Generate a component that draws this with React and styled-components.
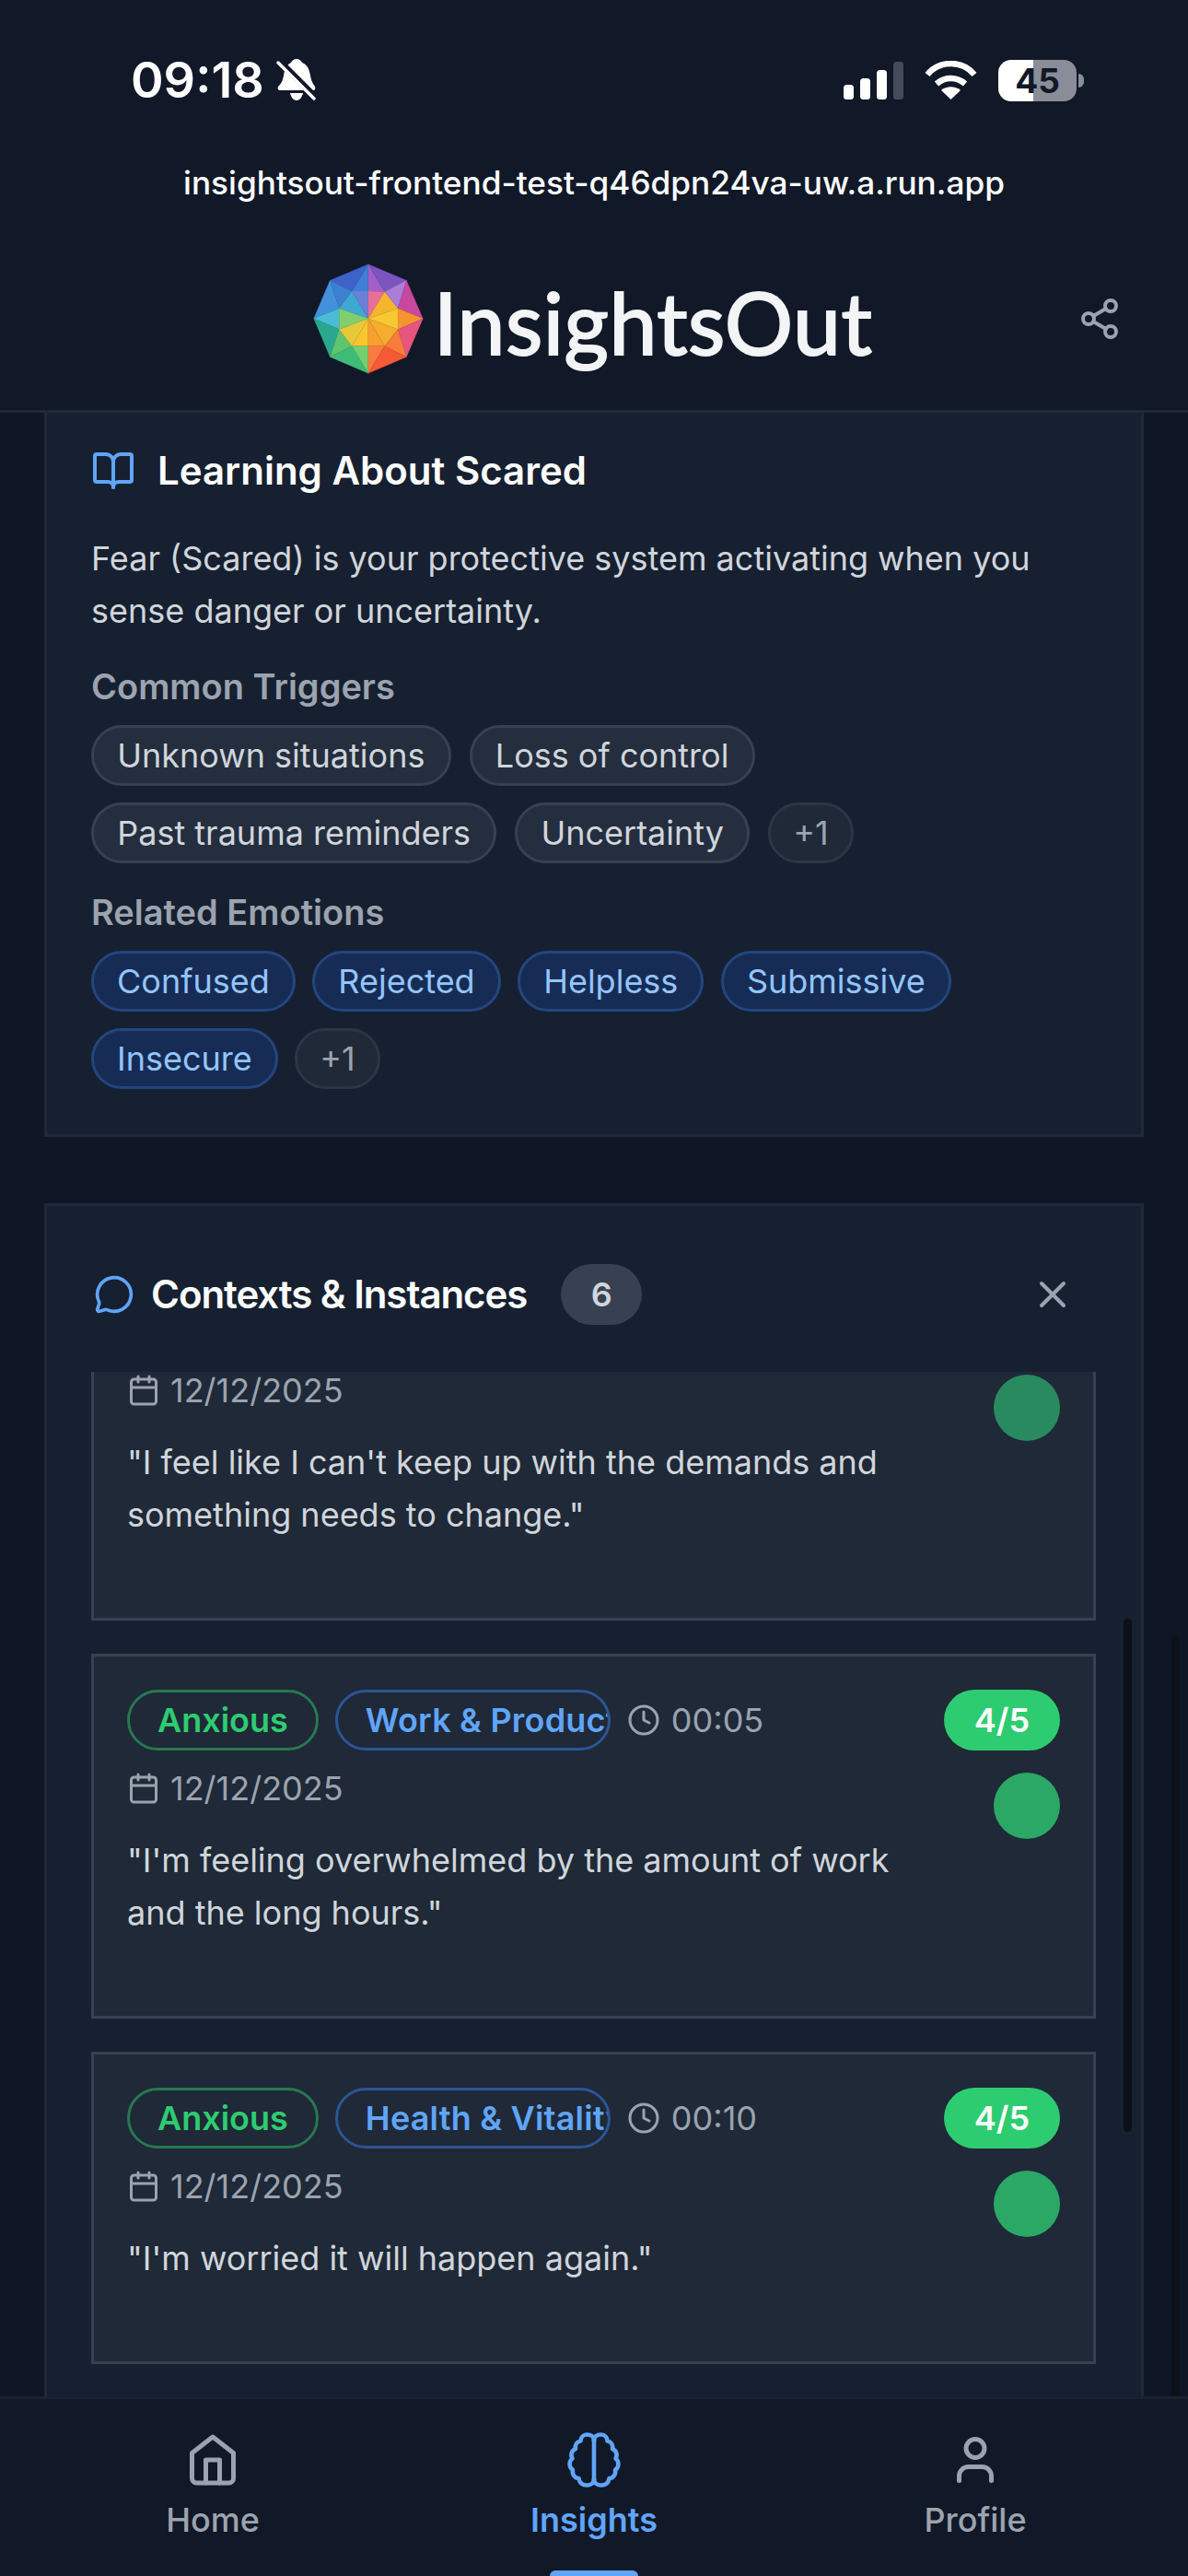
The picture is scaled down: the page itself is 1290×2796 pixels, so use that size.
import React, { useLayoutEffect, useRef } from 'react'
import styled, { createGlobalStyle } from 'styled-components'
import { BookOpen, Calendar, Clock, MessageCircle, Share2, User, X } from 'lucide-react'

const GlobalStyle = createGlobalStyle`
  html, body { margin: 0; padding: 0; background: #111827; }
  * { box-sizing: border-box; }
  body { font-family: Inter, "Liberation Sans", sans-serif; }
`

const Page = styled.div`
  width: 1290px;
  height: 2796px;
  display: flex;
  flex-direction: column;
  overflow: hidden;
  background: #111827;
`

/* top of the screen */
const Header = styled.header`
  height: 448px;
  flex: none;
  background: #111827;
  border-bottom: 3px solid #1f2937;
  color: #fff;
`
const StatusBar = styled.div`
  height: 132px;
  padding: 64px 121px 0 142px;
  display: flex;
  justify-content: space-between;
  align-items: flex-start;
`
const StatusLeft = styled.div`
  display: flex;
  align-items: center;
  gap: 13px;
  height: 46px;
`
const Time = styled.span`
  font-size: 54px;
  font-weight: 600;
  line-height: 46px;
`
const StatusRight = styled.div`
  display: flex;
  align-items: center;
  gap: 23px;
  height: 46px;
`
const Battery = styled.div`
  position: relative;
  width: 85px;
  height: 45px;
  border-radius: 14px;
  background: linear-gradient(to right, #fff 45%, #8a8d98 45%);
  color: #111827;
  font-size: 37px;
  font-weight: 700;
  line-height: 45px;
  text-align: center;
  &::after {
    content: '';
    position: absolute;
    right: -8px;
    top: 15px;
    width: 6px;
    height: 15px;
    border-radius: 0 6px 6px 0;
    background: #8a8d98;
  }
`
const UrlBar = styled.div`
  height: 44px;
  margin-top: 44px;
  font-size: 35.2px;
  font-weight: 500;
  line-height: 44px;
  text-align: center;
`
const Brand = styled.div`
  position: relative;
  display: flex;
  align-items: center;
  justify-content: center;
  gap: 11px;
  height: 120px;
  margin-top: 66px;
  padding-right: 3px;
`
const BrandName = styled.span`
  margin-top: 5px;
  font-family: Lato, "Open Sans", sans-serif;
  font-size: 93px;
  font-weight: 400;
  line-height: 120px;
  letter-spacing: 0.5px;
  -webkit-text-stroke: 2px #f3f4f6;
  color: #f3f4f6;
`
const ShareButton = styled.div`
  position: absolute;
  right: 72px;
  top: 36px;
  display: flex;
  color: #9ca3af;
`

/* scrolling content */
const Main = styled.main`
  position: relative;
  flex: 1;
  min-height: 0;
  overflow: hidden;
  padding: 0 48px;
  background: #0f1726;
`
const Card = styled.section`
  background: #162030;
  border: 3px solid #1f2937;
  border-top-width: ${(p) => (p.$clipped ? 0 : 3)}px;
  padding: ${(p) => (p.$clipped ? '33px 49px 49px 48px' : '63px 49px 0 48px')};
  margin-bottom: 72px;
`
const TitleRow = styled.div`
  display: flex;
  align-items: center;
  gap: ${(p) => p.$gap}px;
  height: ${(p) => p.$height}px;
  color: #60a5fa;
`
const LearnTitle = styled.h2`
  margin: 0;
  font-size: 42px;
  font-weight: 600;
  line-height: 60px;
  color: #fff;
`
const ContextTitle = styled(LearnTitle)`
  letter-spacing: -1.05px;
`
const BubbleIcon = styled(MessageCircle)`
  margin-left: 3px;
`
const Body = styled.p`
  margin: 37px 0 0;
  font-size: 36px;
  line-height: 57px;
  color: #d1d5db;
`
const Label = styled.h3`
  margin: 29px 0 18px;
  font-size: 38px;
  font-weight: 600;
  line-height: 48px;
  color: #9ca3af;
`
const ChipWrap = styled.div`
  display: flex;
  flex-wrap: wrap;
  gap: 18px ${(p) => (p.$tight ? 18.5 : 20)}px;
`
const Chip = styled.span`
  height: 66px;
  padding: 0 ${(p) => (p.$blue ? 25 : 25.2)}px;
  border: 3px solid ${(p) => (p.$blue ? '#23467f' : '#374151')};
  border-radius: 33px;
  background: ${(p) => (p.$blue ? '#172c54' : '#242e3e')};
  color: ${(p) => (p.$blue ? '#93c5fd' : '#d1d5db')};
  font-size: 36px;
  line-height: 60px;
  white-space: nowrap;
`
const MoreChip = styled(Chip)`
  padding: 0 24px;
  border-color: #2c3644;
  background: #1f2937;
  color: #9ca3af;
`
const CountPill = styled.span`
  width: 88px;
  height: 66px;
  margin-left: 19px;
  border-radius: 33px;
  background: #374151;
  color: #d1d5db;
  font-size: 36px;
  font-weight: 600;
  line-height: 66px;
  text-align: center;
`
const CloseButton = styled.div`
  margin-left: auto;
  margin-right: 23px;
  display: flex;
  color: #9ca3af;
`

const InstanceViewport = styled.div`
  height: 1150px;
  margin-top: 51px;
  overflow: hidden;
`
const InstanceList = styled.div`
  display: flex;
  flex-direction: column;
  gap: 36px;
  padding-bottom: 300px;
`
const Instance = styled.article`
  display: grid;
  grid-template-columns: 1fr auto;
  column-gap: 24px;
  padding: 36px 36px 83px;
  border: 3px solid #374151;
  background: #1f2937;
`
const InstanceInfo = styled.div`
  min-width: 0;
`
const MetaRow = styled.div`
  display: flex;
  align-items: center;
  gap: 18px;
  height: 66px;
`
const Tag = styled.span`
  flex: none;
  height: 66px;
  padding: 0 ${(p) => (p.$blue ? 0 : 30)}px 0 30px;
  max-width: 299px;
  overflow: hidden;
  border: 3px solid ${(p) => (p.$blue ? '#2c5596' : '#28784f')};
  border-radius: 33px;
  color: ${(p) => (p.$blue ? '#60a5fa' : '#2ecc71')};
  font-size: 36px;
  font-weight: 600;
  line-height: 60px;
  letter-spacing: ${(p) => (p.$blue ? 0.2 : 0)}px;
  white-space: nowrap;
`
const Stamp = styled.span`
  display: flex;
  align-items: center;
  gap: 12px;
  color: #9ca3af;
  font-size: 36px;
  line-height: 44px;
`
const DateRow = styled(Stamp)`
  margin: 19px 0 0;
  gap: 11px;
`
const Quote = styled.p`
  margin: 28px 0 0;
  max-width: 850px;
  color: #d1d5db;
  font-size: 36px;
  line-height: 57px;
`
const ScoreColumn = styled.div`
  display: flex;
  flex-direction: column;
  align-items: flex-end;
  gap: 24px;
`
const Score = styled.span`
  width: 126px;
  height: 66px;
  border-radius: 33px;
  background: #2ecc71;
  color: #fff;
  font-size: 36px;
  font-weight: 600;
  line-height: 66px;
  text-align: center;
`
const ScoreDot = styled.span`
  width: 72px;
  height: 72px;
  border-radius: 50%;
  background: ${(p) => (p.$dim ? '#2a8a5f' : '#2ba866')};
`
const ScrollThumb = styled.div`
  position: absolute;
  right: ${(p) => p.$right}px;
  top: ${(p) => p.$top}px;
  height: ${(p) => p.$height}px;
  width: 9px;
  border-radius: 5px;
  background: #0c1119;
`

/* bottom tabs */
const Nav = styled.nav`
  flex: none;
  height: 195px;
  padding: 0 24px;
  display: grid;
  grid-template-columns: repeat(3, 1fr);
  border-top: 3px solid #1a2332;
  background: #111827;
`
const NavItem = styled.div`
  position: relative;
  display: flex;
  flex-direction: column;
  align-items: center;
  padding-top: 36px;
  color: ${(p) => (p.$active ? '#60a5fa' : '#9ca3af')};
  font-size: 36px;
  font-weight: ${(p) => (p.$active ? 600 : 500)};
  line-height: 44px;
  & > span { margin-top: 13px; }
  ${(p) => p.$active && `
    &::after {
      content: '';
      position: absolute;
      left: 50%;
      bottom: 0;
      width: 96px;
      height: 6px;
      margin-left: -48px;
      border-radius: 6px 6px 0 0;
      background: #60a5fa;
    }
  `}
`

const facets = [
  ['243,55 118,108 190,143', '#3f62c8'], ['243,55 190,143 243,143', '#3f7fd8'],
  ['243,55 243,143 297,145', '#a060c8'], ['243,55 297,145 368,108', '#7a55c0'],
  ['118,108 148,200 190,143', '#3d7fd0'], ['118,108 65,233 148,200', '#4390dc'],
  ['190,143 148,200 243,233', '#3fa8d0'], ['190,143 243,143 243,233', '#6a80d8'],
  ['243,143 297,145 243,233', '#e86f9a'], ['297,145 340,200 243,233', '#f5b52f'],
  ['297,145 368,108 340,200', '#ab7ed6'], ['368,108 422,233 340,200', '#c8489f'],
  ['65,233 148,200 148,268', '#4abcd6'], ['148,200 243,233 148,268', '#7fcf70'],
  ['243,233 340,200 340,268', '#f7c830'], ['340,200 422,233 340,268', '#f6952f'],
  ['65,233 148,268 118,358', '#2aa88e'], ['148,268 190,323 118,358', '#5fc46f'],
  ['148,268 243,233 190,323', '#e6c83a'], ['243,233 243,323 190,323', '#f9c52f'],
  ['243,233 297,323 243,323', '#f5a02f'], ['243,233 340,268 297,323', '#f4ad2f'],
  ['422,233 340,268 368,358', '#e5557e'], ['340,268 297,323 368,358', '#f97c3a'],
  ['118,358 190,323 243,412', '#3fbc78'], ['190,323 243,323 243,412', '#74d06e'],
  ['243,323 297,323 243,412', '#fb7a3f'], ['297,323 368,358 243,412', '#f55a35'],
]

const LogoMark = () => (
  <svg width="120" height="120" viewBox="63 53 361 361" aria-hidden="true">
    {facets.map(([points, fill]) => (
      <polygon key={points} points={points} fill={fill} stroke={fill} strokeWidth="0.6" />
    ))}
  </svg>
)

const MutedBell = () => (
  <svg width="44" height="47" viewBox="0 0 44 47" aria-hidden="true">
    <path
      fill="#fff"
      d="M22 0c3 0 5 2 6 4 6 2 8 8 9 14 1 6 3 9 5 12 1 2 0 4-2 4H4c-2 0-3-2-2-4 3-3 5-6 6-12 1-6 3-12 8-14 1-2 3-4 6-4zM15 37h14c-1 5-4 8-7 8s-6-3-7-8z"
    />
    <path d="M4 3l37 37" stroke="#111827" strokeWidth="7" />
    <path d="M2 4l39 39" stroke="#fff" strokeWidth="3.4" strokeLinecap="round" />
  </svg>
)

const Signal = () => (
  <svg width="65" height="41" viewBox="0 0 65 41" aria-hidden="true">
    <rect x="0" y="25" width="11" height="16" rx="3.5" fill="#fff" />
    <rect x="18" y="18" width="11" height="23" rx="3.5" fill="#fff" />
    <rect x="36" y="9" width="11" height="32" rx="3.5" fill="#fff" />
    <rect x="54" y="0" width="11" height="41" rx="3.5" fill="#454b58" />
  </svg>
)

const Wifi = () => (
  <svg width="57" height="42" viewBox="0 0 57 42" aria-hidden="true">
    <path d="M3 15C16-1 41-1 54 15" fill="none" stroke="#fff" strokeWidth="6.5" />
    <path d="M13 25c9-8 22-8 31 0" fill="none" stroke="#fff" strokeWidth="6.5" />
    <path d="M28.5 42 18 32c6-5 15-5 21 0z" fill="#fff" />
  </svg>
)

const HomeIcon = () => (
  <svg width="60" height="60" viewBox="0 0 24 24" fill="none" stroke="currentColor" strokeWidth="2" strokeLinecap="round" strokeLinejoin="round" aria-hidden="true">
    <path d="m3 9 9-7 9 7v11a2 2 0 0 1-2 2H5a2 2 0 0 1-2-2z" />
    <path d="M9 22V12h6v10" />
  </svg>
)

const brainLobe = 'M30 9C30 4.500 26.500 2.500 22.500 2.500C18 2.500 15.500 6 15.500 9.500C11.500 10 9 13.500 10 18C6 19.500 4 24.500 6.500 28.500C2.500 31.500 2.500 38 7 41C6 46 9.500 50 13.500 50C14 55 18 57.500 22 57.500C26.500 57.500 30 55 30 51'

const BrainIcon = () => (
  <svg width="60" height="60" viewBox="0 0 60 60" fill="none" stroke="currentColor" strokeWidth="4.6" strokeLinecap="round" strokeLinejoin="round" aria-hidden="true">
    <path d={brainLobe} />
    <path d={brainLobe} transform="translate(60 0) scale(-1 1)" />
    <path d="M30 9v42" />
  </svg>
)

const instances = [
  { id: 1, tag: 'Work & Productivity', time: '00:02', quote: '"I feel like I can\'t keep up with the demands and something needs to change."', dim: true },
  { id: 2, tag: 'Work & Productivity', time: '00:05', quote: '"I\'m feeling overwhelmed by the amount of work and the long hours."' },
  { id: 3, tag: 'Health & Vitality', time: '00:10', quote: '"I\'m worried it will happen again."' },
]

export default function App() {
  const listRef = useRef(null)

  // the list sits scrolled a little way down
  useLayoutEffect(() => {
    listRef.current.scrollTop = 126
  }, [])

  return (
    <Page>
      <GlobalStyle />
      <Header>
        <StatusBar>
          <StatusLeft>
            <Time>09:18</Time>
            <MutedBell />
          </StatusLeft>
          <StatusRight>
            <Signal />
            <Wifi />
            <Battery>45</Battery>
          </StatusRight>
        </StatusBar>
        <UrlBar>insightsout-frontend-test-q46dpn24va-uw.a.run.app</UrlBar>
        <Brand>
          <LogoMark />
          <BrandName>InsightsOut</BrandName>
          <ShareButton><Share2 size={48} strokeWidth={2} /></ShareButton>
        </Brand>
      </Header>

      <Main>
        <Card $clipped>
          <TitleRow $gap={24} $height={60}>
            <BookOpen size={48} strokeWidth={2} />
            <LearnTitle>Learning About Scared</LearnTitle>
          </TitleRow>
          <Body>Fear (Scared) is your protective system activating when you sense danger or uncertainty.</Body>
          <Label>Common Triggers</Label>
          <ChipWrap>
            <Chip>Unknown situations</Chip>
            <Chip>Loss of control</Chip>
            <Chip>Past trauma reminders</Chip>
            <Chip>Uncertainty</Chip>
            <MoreChip>+1</MoreChip>
          </ChipWrap>
          <Label>Related Emotions</Label>
          <ChipWrap $tight>
            <Chip $blue>Confused</Chip>
            <Chip $blue>Rejected</Chip>
            <Chip $blue>Helpless</Chip>
            <Chip $blue>Submissive</Chip>
            <Chip $blue>Insecure</Chip>
            <MoreChip>+1</MoreChip>
          </ChipWrap>
        </Card>

        <Card>
          <TitleRow $gap={18} $height={66}>
            <BubbleIcon size={44} strokeWidth={2} />
            <ContextTitle>Contexts &amp; Instances</ContextTitle>
            <CountPill>6</CountPill>
            <CloseButton><X size={48} strokeWidth={2} /></CloseButton>
          </TitleRow>
          <InstanceViewport ref={listRef}>
            <InstanceList>
              {instances.map((item) => (
                <Instance key={item.id}>
                  <InstanceInfo>
                    <MetaRow>
                      <Tag>Anxious</Tag>
                      <Tag $blue>{item.tag}</Tag>
                      <Stamp><Clock size={36} strokeWidth={2} />{item.time}</Stamp>
                    </MetaRow>
                    <DateRow><Calendar size={36} strokeWidth={2} />12/12/2025</DateRow>
                    <Quote>{item.quote}</Quote>
                  </InstanceInfo>
                  <ScoreColumn>
                    <Score>4/5</Score>
                    <ScoreDot $dim={item.dim} />
                  </ScoreColumn>
                </Instance>
              ))}
            </InstanceList>
          </InstanceViewport>
        </Card>

        <ScrollThumb $right={61} $top={1309} $height={557} />
        <ScrollThumb $right={9} $top={1328} $height={830} />
      </Main>

      <Nav>
        <NavItem><HomeIcon /><span>Home</span></NavItem>
        <NavItem $active><BrainIcon /><span>Insights</span></NavItem>
        <NavItem><User size={60} strokeWidth={2} /><span>Profile</span></NavItem>
      </Nav>
    </Page>
  )
}
